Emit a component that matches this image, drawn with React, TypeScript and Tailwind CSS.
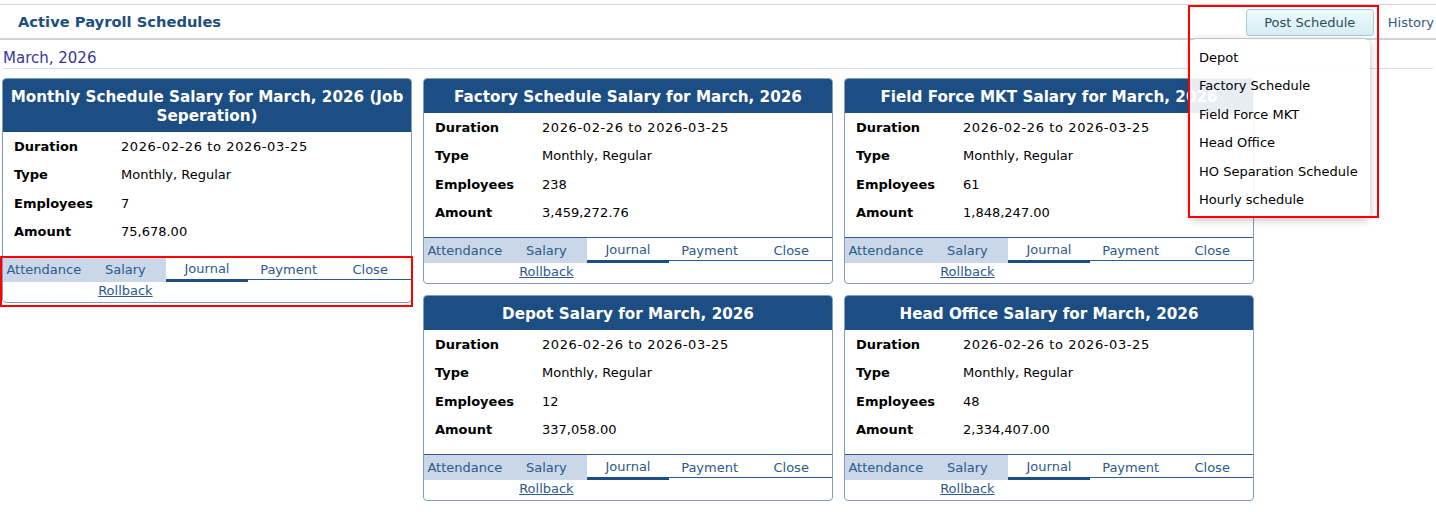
import React from 'react'

type Schedule = {
  title: string
  employees: string
  amount: string
}

const schedules: Schedule[] = [
  { title: 'Monthly Schedule Salary for March, 2026 (Job Seperation)', employees: '7', amount: '75,678.00' },
  { title: 'Factory Schedule Salary for March, 2026', employees: '238', amount: '3,459,272.76' },
  { title: 'Field Force MKT Salary for March, 2026', employees: '61', amount: '1,848,247.00' },
  { title: 'Depot Salary for March, 2026', employees: '12', amount: '337,058.00' },
  { title: 'Head Office Salary for March, 2026', employees: '48', amount: '2,334,407.00' },
]

const menuItems = ['Depot', 'Factory Schedule', 'Field Force MKT', 'Head Office', 'HO Separation Schedule', 'Hourly schedule']

const ScheduleCard = ({ s }: { s: Schedule }) => {
  const rows = [
    ['Duration', '2026-02-26 to 2026-03-25'],
    ['Type', 'Monthly, Regular'],
    ['Employees', s.employees],
    ['Amount', s.amount],
  ]
  return (
    <div className="w-[410px] shrink-0 border border-[#7f9dc0] rounded-[4px] overflow-hidden bg-white">
      {/* Title */}
      <div className="bg-[#1c4e84] text-white text-center font-bold text-[15.2px] leading-[19px] px-[4px] pt-[8.5px] pb-[6.5px]">{s.title}</div>
      {/* Details */}
      <div className="pb-[10px]">
        {rows.map(([label, value]) => (
          <div key={label} className="flex items-center h-[28.5px] text-[13px] text-black">
            <span className="w-[118px] pl-[11px] font-bold">{label}</span>
            <span className={label === 'Duration' ? 'tracking-[0.6px]' : ''}>{value}</span>
          </div>
        ))}
      </div>
      {/* Actions */}
      <div className="grid grid-cols-5 border-t border-b border-[#2d5b8e] text-[13px] text-[#2c5a8c] h-[24px]">
        <span className="bg-[#c9d7e9] flex items-center justify-center">Attendance</span>
        <span className="bg-[#c9d7e9] flex items-center justify-center">Salary</span>
        <span className="flex items-center justify-center border-b-[3px] border-[#1c4e84] pt-[2px]">Journal</span>
        <span className="flex items-center justify-center">Payment</span>
        <span className="flex items-center justify-center">Close</span>
      </div>
      <div className="grid grid-cols-5 h-[22px] text-[13px]">
        <span />
        <span className="flex items-center justify-center text-[#2c5a8c] underline">Rollback</span>
      </div>
    </div>
  )
}

export default function App() {
  return (
    <div className="relative w-[1436px] h-[512px] overflow-hidden bg-white font-['DejaVu_Sans',sans-serif]">
      {/* Page header */}
      <header className="mt-[4px] h-[36px] border-t border-b-2 border-[#d3d3d3] flex items-center justify-between pl-[18px] pr-[2px]">
        <h1 className="pt-[2px] text-[14.7px] font-bold text-[#1f4f80]">Active Payroll Schedules</h1>
        <div className="flex items-center gap-[14px] pt-[2px]">
          <button className="w-[128px] h-[27px] rounded-[3px] border border-[#a6cdd6] bg-gradient-to-b from-[#eef9fb] to-[#d7eef3] text-[13px] text-[#1f4f5e]">Post Schedule</button>
          <span className="text-[13px] text-[#2c5a8c]">History</span>
        </div>
      </header>

      <div className="mx-[3px] h-[29px] border-b border-[#dadde8] flex items-end pb-[1px] text-[15px] leading-[18px] text-[#3636a0]">March, 2026</div>

      {/* Cards */}
      <section className="mt-[9px] pl-[2px] flex items-start gap-[11px]">
        <ScheduleCard s={schedules[0]} />
        <div className="w-[831px] flex flex-wrap gap-[11px]">
          {schedules.slice(1).map((s) => (
            <ScheduleCard key={s.title} s={s} />
          ))}
        </div>
      </section>

      {/* Post schedule dropdown */}
      <div className="absolute left-[1190px] top-[39px] w-[180px] py-[4px] rounded-[6px] bg-white/90 shadow-[0_2px_8px_rgba(0,0,0,0.25)]">
        {menuItems.map((m) => (
          <div key={m} className="h-[28.5px] flex items-center px-[9px] text-[13px] text-black">{m}</div>
        ))}
      </div>

      {/* Annotation boxes */}
      <div className="absolute left-[1188px] top-[5px] w-[191px] h-[213px] border-2 border-[#ff0000]" />
      <div className="absolute left-0 top-[256px] w-[413px] h-[51px] border-2 border-[#ff0000]" />
    </div>
  )
}
